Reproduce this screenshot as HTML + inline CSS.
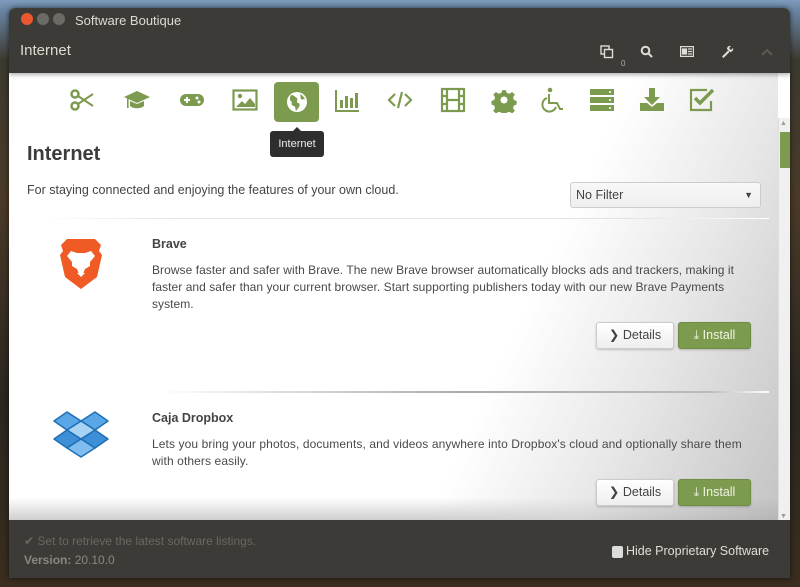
<!DOCTYPE html>
<html><head><meta charset="utf-8"><style>
*{margin:0;padding:0;box-sizing:border-box}
body{width:800px;height:587px;overflow:hidden;position:relative;font-family:"Liberation Sans","DejaVu Sans",sans-serif;
background:linear-gradient(180deg,#7d9bbd 0px,#6a86a6 10px,#3d3a30 60px,#4a3a28 200px,#2a2620 400px,#3a2e1e 587px);}
.win{position:absolute;left:9px;top:8px;width:781px;height:570px;background:#fff;border-radius:6px 6px 0 0;overflow:hidden;box-shadow:0 0 6px rgba(0,0,0,.6)}
.hdr{position:absolute;left:0;top:0;width:781px;height:65px;background:#3c3b37;box-shadow:0 2px 4px rgba(0,0,0,.3);z-index:2}
.title{position:absolute;left:66px;top:5px;color:#dfdbd2;font-size:13px}
.sub{position:absolute;left:11px;top:34px;color:#dfdbd2;font-size:15px}
.btn{position:absolute;top:5px;width:12px;height:12px;border-radius:50%;background:#6b6a65}
.cat{position:absolute;top:72px;width:44px;height:40px;display:flex;align-items:center;justify-content:center}
.cat svg{width:26px;height:26px}
.g{fill:#7d9b4f}
.main{position:absolute;left:0;top:65px;width:769px;height:447px;background:#fff;overflow:hidden}
.shade{position:absolute;left:0;top:0;width:769px;height:447px;background:linear-gradient(115deg,rgba(255,255,255,0) 64%,rgba(215,215,215,.6) 80%,rgba(170,170,170,.7) 100%),linear-gradient(180deg,rgba(255,255,255,0) 95%,rgba(160,160,160,.5) 100%)}
.sb{position:absolute;left:769px;top:110px;width:12px;height:402px;background:#f0f0f0;border-left:1px solid #ddd}
.foot{position:absolute;left:0;top:512px;width:781px;height:58px;background:#3c3b37}
.dbtn{position:absolute;width:78px;height:27px;border:1px solid #ccc;border-radius:3px;background:linear-gradient(#fff,#eee);font-size:12.5px;color:#444;text-align:center;line-height:25px;box-shadow:0 1px 2px rgba(0,0,0,.2)}
.ibtn{position:absolute;width:73px;height:27px;border-radius:3px;background:#7d9b4f;border:1px solid #6f8c44;font-size:12.5px;color:#eef4e4;text-align:center;line-height:25px;box-shadow:0 1px 2px rgba(0,0,0,.2)}
.desc{position:absolute;left:143px;font-size:12px;color:#4a4a4a;line-height:17px;white-space:nowrap}
</style></head><body>
<div class="win">
 <div class="hdr">
  <div class="btn" style="left:12px;background:#e9582f"></div>
  <div class="btn" style="left:28px"></div>
  <div class="btn" style="left:44px"></div>
  <div class="title">Software Boutique</div>
  <div class="sub">Internet</div>
  <svg style="position:absolute;left:591px;top:37px" width="14" height="14" viewBox="0 0 14 14" fill="none" stroke="#e0ddd6" stroke-width="1.4"><rect x="1" y="1" width="8" height="8"/><rect x="4.5" y="4.5" width="8" height="8" fill="#3c3b37"/></svg>
  <div style="position:absolute;left:612px;top:51px;font-size:8px;color:#aaa">0</div>
  <svg style="position:absolute;left:631px;top:37px" width="13" height="13" viewBox="0 0 13 13" fill="none" stroke="#e0ddd6" stroke-width="2"><circle cx="5.5" cy="5.5" r="3.8"/><path d="M8.5 8.5l3.5 3.5"/></svg>
  <svg style="position:absolute;left:671px;top:38px" width="14" height="11" viewBox="0 0 14 11" fill="none" stroke="#e0ddd6" stroke-width="1.2"><rect x=".6" y=".6" width="12.8" height="9.8"/><rect x="2.5" y="3" width="4" height="5" fill="#e0ddd6"/><path d="M8 3h4M8 5.5h4M8 8h4"/></svg>
  <svg style="position:absolute;left:712px;top:37px" width="13" height="13" viewBox="0 0 13 13"><path d="M1 11.5l6-6 1.5 1.5-6 6z M6 4a3 3 0 0 1 4-3l-2 2 2 2 2-2a3 3 0 0 1-3 4z" fill="#e0ddd6"/></svg>
  <svg style="position:absolute;left:752px;top:40px" width="12" height="8" viewBox="0 0 12 8" fill="none" stroke="#5c5b56" stroke-width="2"><path d="M1 7l5-5 5 5"/></svg>
 </div>
 <div class="main">
  <div class="shade"></div>
  <div style="position:absolute;left:18px;top:70px;font-size:20px;font-weight:bold;color:#3c3c3c">Internet</div>
  <div style="position:absolute;left:18px;top:110px;font-size:12.5px;color:#444">For staying connected and enjoying the features of your own cloud.</div>
  <div style="position:absolute;left:561px;top:109px;width:191px;height:26px;border:1px solid #ccc;border-radius:3px;background:linear-gradient(#f8f8f8,#eee);font-size:12.5px;color:#444;line-height:24px;padding-left:5px">No Filter<span style="position:absolute;right:7px;top:0;font-size:9px">&#9660;</span></div>
  <div style="position:absolute;left:30px;top:145px;width:730px;height:1px;background:linear-gradient(90deg,#fff,#e2e2e2 20%,#e2e2e2 80%,#fff)"></div>
  <svg style="position:absolute;left:48px;top:164px" width="48" height="54" viewBox="0 0 48 54"><path d="M10 2h28l6 6-2 6 3 4-5 22-16 12-16-12-5-22 3-4-2-6z" fill="#f05a24"/><path d="M14 14l6 2h8l6-2 4 5-5 6v4l-5 3-2 5h-4l-2-5-5-3v-4l-5-6z" fill="#fff"/><path d="M20 36h8l-4 4z" fill="#fff"/></svg>
  <div style="position:absolute;left:143px;top:164px;font-size:12.5px;font-weight:bold;color:#444">Brave</div>
  <div class="desc" style="top:189px;letter-spacing:.05px">Browse faster and safer with Brave. The new Brave browser automatically blocks ads and trackers, making it<br>faster and safer than your current browser. Start supporting publishers today with our new Brave Payments<br>system.</div>
  <div class="dbtn" style="left:587px;top:249px">&#10095; Details</div>
  <div class="ibtn" style="left:669px;top:249px">&#10515; Install</div>
  <div style="position:absolute;left:150px;top:318px;width:610px;height:2px;background:linear-gradient(90deg,#fff,#aaa 50%,#bbb 90%,#fff)"></div>
  <svg style="position:absolute;left:44px;top:337px" width="56" height="54" viewBox="0 0 56 54" stroke="#1f6fb5" stroke-width="1.5" stroke-linejoin="round"><path d="M14 2l14 9-14 9-13-9z" fill="#5aa7e8"/><path d="M42 2l-14 9 14 9 13-9z" fill="#5aa7e8"/><path d="M14 20l14 9-14 9-13-9z" fill="#3d8fd8"/><path d="M42 20l-14 9 14 9 13-9z" fill="#3d8fd8"/><path d="M14 38l14 9 14-9-14-9z" fill="#7fbcef"/><path d="M28 11l14 9-14 9-14-9z" fill="#a9d3f5"/></svg>
  <div style="position:absolute;left:143px;top:338px;font-size:12.5px;font-weight:bold;color:#444">Caja Dropbox</div>
  <div class="desc" style="top:363px;letter-spacing:.1px">Lets you bring your photos, documents, and videos anywhere into Dropbox's cloud and optionally share them<br>with others easily.</div>
  <div class="dbtn" style="left:587px;top:406px">&#10095; Details</div>
  <div class="ibtn" style="left:669px;top:406px">&#10515; Install</div>
 </div>
 <div class="cat" style="left:51px"><svg viewBox="0 0 26 26"><circle cx="6" cy="7" r="3.5" fill="none" stroke="#7d9b4f" stroke-width="2.5"/><circle cx="6" cy="19" r="3.5" fill="none" stroke="#7d9b4f" stroke-width="2.5"/><path d="M9 9l15 10M9 17l15-10" stroke="#7d9b4f" stroke-width="2"/></svg></div>
 <div class="cat" style="left:106px"><svg viewBox="0 0 26 26"><path class="g" d="M13 4l13 6-13 6L0 10z"/><path class="g" d="M6 14v5c3 3 11 3 14 0v-5l-7 3z"/><rect class="g" x="3" y="11" width="1.6" height="10"/></svg></div>
 <div class="cat" style="left:161px"><svg viewBox="0 0 26 26"><rect class="g" x="1" y="7" width="24" height="12" rx="6"/><path d="M5 13h6M8 10v6" stroke="#fff" stroke-width="2"/><circle cx="18" cy="11" r="1.5" fill="#fff"/><circle cx="20" cy="15" r="1.5" fill="#fff"/></svg></div>
 <div class="cat" style="left:214px"><svg viewBox="0 0 26 26"><rect x="1.5" y="3.5" width="23" height="19" fill="none" stroke="#7d9b4f" stroke-width="2.2"/><circle class="g" cx="8" cy="9" r="2.2"/><path class="g" d="M4 20l6-6 3 3 5-6 5 6v3z"/></svg></div>
 <div style="position:absolute;left:265px;top:74px;width:45px;height:40px;background:#7d9b4f;border-radius:4px;z-index:3;display:flex;align-items:center;justify-content:center"><svg width="24" height="24" viewBox="0 0 24 24"><circle cx="12" cy="12" r="10" fill="#fff"/><path d="M6 5c3 0 4 2 6 3 1 2-1 4 1 5 2 0 2 2 1 4l-3 4c-1-2 0-4-2-5-2 0-3-2-2-4-2-1-3-3-1-7z" fill="#7d9b4f"/><path d="M15 4c2 1 3 2 5 5-2 0-3 1-4 0-1-2 0-3-1-5z" fill="#7d9b4f"/></svg></div>
 <div style="position:absolute;left:261px;top:123px;width:54px;height:26px;background:#2e2e2e;border-radius:3px;color:#eee;font-size:11px;text-align:center;line-height:26px;z-index:3">Internet<div style="position:absolute;left:23px;top:-4px;border:4px solid transparent;border-top:0;border-bottom-color:#2e2e2e"></div></div>
 <div class="cat" style="left:316px"><svg viewBox="0 0 26 26"><path d="M2 3v21h23" fill="none" stroke="#7d9b4f" stroke-width="2"/><rect class="g" x="6" y="13" width="3" height="8"/><rect class="g" x="11" y="9" width="3" height="12"/><rect class="g" x="16" y="11" width="3" height="10"/><rect class="g" x="21" y="6" width="3" height="15"/></svg></div>
 <div class="cat" style="left:369px"><svg viewBox="0 0 26 26" fill="none" stroke="#7d9b4f" stroke-width="2.2"><path d="M8 7l-6 6 6 6M18 7l6 6-6 6M15 5l-4 16"/></svg></div>
 <div class="cat" style="left:422px"><svg viewBox="0 0 26 26" fill="none" stroke="#7d9b4f" stroke-width="2.2"><rect x="2" y="2" width="22" height="22"/><path d="M7 2v22M19 2v22M2 9h5M2 17h5M19 9h5M19 17h5M7 13h12"/></svg></div>
 <div class="cat" style="left:473px"><svg viewBox="0 0 26 26"><path class="g" d="M11 2h4l1 3 3 1 3-2 3 3-2 3 1 3 3 1v4l-3 1-1 3 2 3-3 3-3-2-3 1-1 3h-4l-1-3-3-1-3 2-3-3 2-3-1-3-3-1v-4l3-1 1-3-2-3 3-3 3 2 3-1z" transform="scale(.9) translate(1.5 1.5)"/><circle cx="13" cy="13" r="3.5" fill="#fff"/></svg></div>
 <div class="cat" style="left:521px"><svg viewBox="0 0 26 26"><circle class="g" cx="11" cy="3" r="2.3"/><path d="M10 7v9h8l3 6h3M8 11a7 7 0 1 0 9 9" fill="none" stroke="#7d9b4f" stroke-width="2"/></svg></div>
 <div class="cat" style="left:571px"><svg viewBox="0 0 26 26"><rect class="g" x="1" y="2" width="24" height="6"/><rect class="g" x="1" y="10" width="24" height="6"/><rect class="g" x="1" y="18" width="24" height="6"/><g fill="#fff"><circle cx="21" cy="5" r="1"/><circle cx="21" cy="13" r="1"/><circle cx="21" cy="21" r="1"/></g></svg></div>
 <div class="cat" style="left:621px"><svg viewBox="0 0 26 26"><path class="g" d="M10 1h6v9h5l-8 8-8-8h5z"/><path class="g" d="M1 16h7l5 4 5-4h7v8H1z"/></svg></div>
 <div class="cat" style="left:671px"><svg viewBox="0 0 26 26"><path d="M22 14v9H2V3h16" fill="none" stroke="#7d9b4f" stroke-width="2.2"/><path d="M6 11l5 5 13-13" fill="none" stroke="#7d9b4f" stroke-width="3.5"/></svg></div>
 <div class="sb"><div style="position:absolute;left:1px;top:2px;font-size:7px;color:#999">&#9650;</div><div style="position:absolute;left:1px;top:14px;width:10px;height:36px;background:#7d9b4f"></div><div style="position:absolute;left:1px;bottom:0;font-size:7px;color:#999">&#9660;</div></div>
 <div class="foot">
  <div style="position:absolute;left:15px;top:14px;font-size:12px;color:#6a6862">&#10004; Set to retrieve the latest software listings.</div>
  <div style="position:absolute;left:15px;top:33px;font-size:12px;color:#8a8780"><b>Version:</b> 20.10.0</div>
  <div style="position:absolute;left:603px;top:26px;width:11px;height:12px;background:#ddd;border-radius:2px"></div>
  <div style="position:absolute;left:617px;top:24px;font-size:12.5px;color:#e0ddd6">Hide Proprietary Software</div>
 </div>
</div>
</body></html>
